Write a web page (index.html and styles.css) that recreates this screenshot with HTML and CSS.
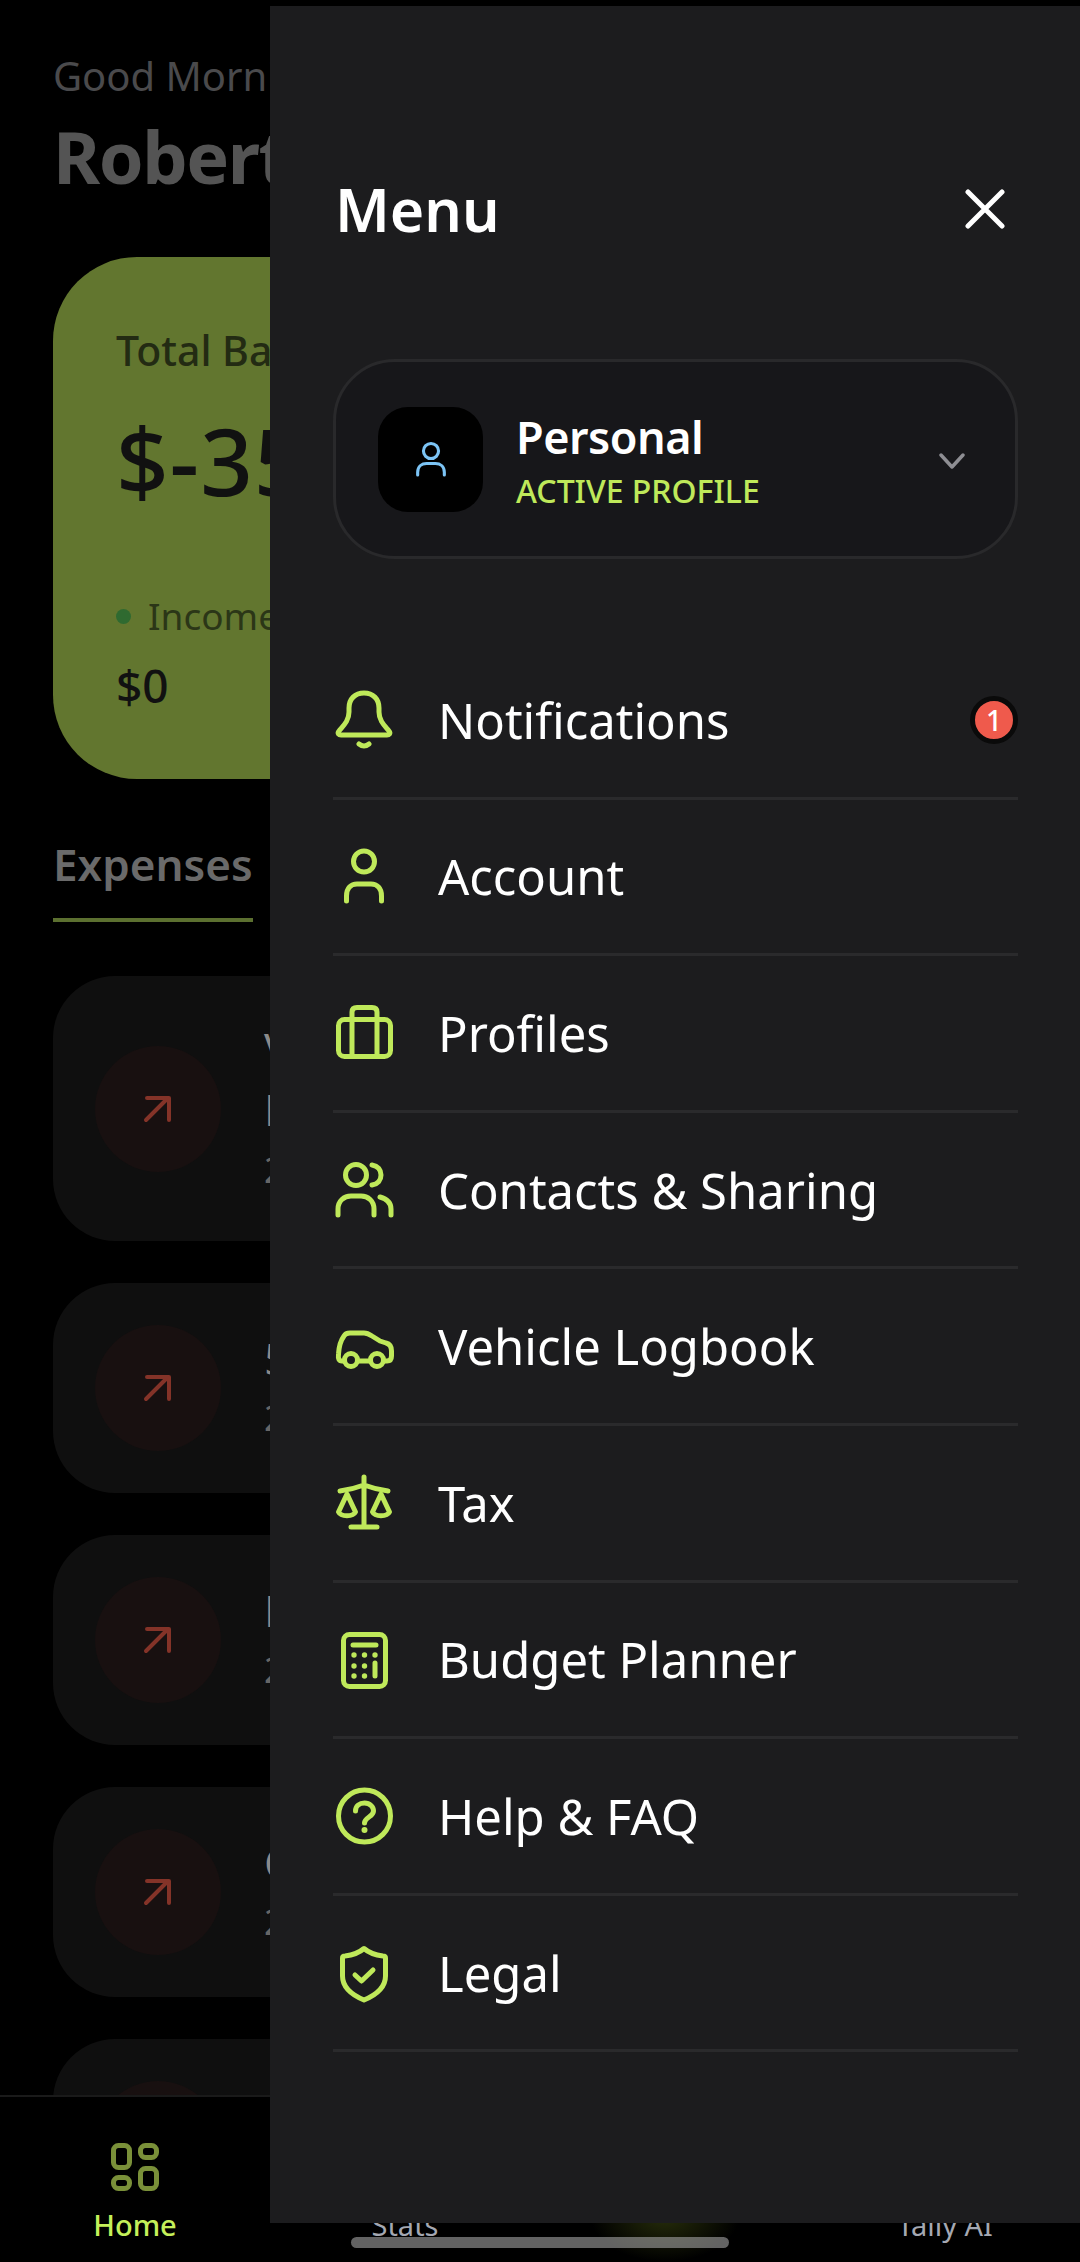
FILE: index.html
```html
<!DOCTYPE html>
<html lang="en">
<head>
  <meta charset="UTF-8" />
  <meta name="viewport" content="width=device-width, initial-scale=1.0"/>
  <title>Tally Menu</title>
  <link rel="stylesheet" href="styles.css">
</head>
<body>

  <div class="app">

    <!-- dimmed home screen behind the drawer -->
    <main class="home">
      <p class="greeting">Good Morning,</p>
      <h1 class="name">Robert</h1>

      <section class="balance">
        <p class="balance-label">Total Balance</p>
        <p class="balance-value">$-350.00</p>
        <p class="income"><span class="dot"></span>Income</p>
        <p class="income-value">$0</p>
      </section>

      <div class="tabs"><span class="tab">Expenses</span></div>

      <div class="tx tx-tall">
        <span class="tx-icon"><svg viewBox="0 0 32 32"><path d="M4 27 L26 5 M5 5 H27 V27"/></svg></span>
        <div><p class="tx-title">Vet</p><p class="tx-sub">Pets</p><p class="tx-date">2 Jan</p></div>
      </div>
      <div class="tx">
        <span class="tx-icon"><svg viewBox="0 0 32 32"><path d="M4 27 L26 5 M5 5 H27 V27"/></svg></span>
        <div><p class="tx-title">5 Star</p><p class="tx-date">2 Jan</p></div>
      </div>
      <div class="tx">
        <span class="tx-icon"><svg viewBox="0 0 32 32"><path d="M4 27 L26 5 M5 5 H27 V27"/></svg></span>
        <div><p class="tx-title">Rent</p><p class="tx-date">2 Jan</p></div>
      </div>
      <div class="tx">
        <span class="tx-icon"><svg viewBox="0 0 32 32"><path d="M4 27 L26 5 M5 5 H27 V27"/></svg></span>
        <div><p class="tx-title">Car</p><p class="tx-date">2 Jan</p></div>
      </div>
      <div class="tx">
        <span class="tx-icon"></span>
      </div>
    </main>

    <nav class="tabbar">
      <div class="tabbar-item active">
        <svg class="tabbar-icon" viewBox="0 0 48 48">
          <rect x="2.5" y="2.5" width="16" height="22" rx="5"/>
          <rect x="29.5" y="2.5" width="16" height="12" rx="5"/>
          <rect x="2.5" y="34.5" width="16" height="11" rx="5"/>
          <rect x="29.5" y="25.5" width="16" height="20" rx="5"/>
        </svg>
        <span>Home</span>
      </div>
      <div class="tabbar-item"><span>Stats</span></div>
      <div class="tabbar-item"><span class="tabbar-gap"></span></div>
      <div class="tabbar-item"><span>Tally AI</span></div>
    </nav>
    <div class="glow"></div>

    <aside class="drawer">
      <header class="drawer-head">
        <h2>Menu</h2>
        <svg class="close" viewBox="0 0 40 40"><path d="M3 3 L37 37 M37 3 L3 37"/></svg>
      </header>

      <div class="profile">
        <span class="avatar">
          <svg viewBox="0 0 36 40"><circle cx="18" cy="11" r="8.5"/><path d="M3 38 V35 C3 28 8 25 13 25 H23 C28 25 33 28 33 35 V38"/></svg>
        </span>
        <div class="profile-text">
          <p class="profile-name">Personal</p>
          <p class="profile-role">ACTIVE PROFILE</p>
        </div>
        <svg class="chevron" viewBox="0 0 26 16"><path d="M2 2 L13 14 L24 2"/></svg>
      </div>

      <ul class="menu">
        <li class="menu-item">
          <svg class="menu-icon" viewBox="0 0 60 60"><path d="M30 3 C21 3 15 9 15 18 V22 C15 31 9 36 5 41 C3 43.5 5 45 7 45 H53 C55 45 57 43.5 55 41 C51 36 45 31 45 22 V18 C45 9 39 3 30 3 Z"/><path d="M25 54 Q30 58 35 54"/></svg>
          <span>Notifications</span>
          <span class="badge">1</span>
        </li>
        <li class="menu-item">
          <svg class="menu-icon" viewBox="0 0 60 60"><circle cx="30" cy="15.5" r="10.5"/><path d="M12.5 55 V50 C12.5 42 17 38 23 38 H37 C43 38 47.5 42 47.5 50 V55"/></svg>
          <span>Account</span>
        </li>
        <li class="menu-item">
          <svg class="menu-icon" viewBox="0 0 60 60"><rect x="4.5" y="16.5" width="52" height="37" rx="6"/><path d="M18 53 V9 C18 6 20 4.5 23 4.5 H38 C41 4.5 43 6 43 9 V53"/></svg>
          <span>Profiles</span>
        </li>
        <li class="menu-item">
          <svg class="menu-icon" viewBox="0 0 60 60"><circle cx="22" cy="15" r="10.5"/><path d="M4 55 V49 C4 41 10 36 17 36 H27 C34 36 40 41 40 49 V55"/><path d="M38 5 C44 6 47 10 47 15 C47 20 44 24 38 25"/><path d="M46 37 C53 39 57 43 57 49 V55"/></svg>
          <span>Contacts &amp; Sharing</span>
        </li>
        <li class="menu-item">
          <svg class="menu-icon" viewBox="0 0 60 60"><path d="M10 45 H8 C5 45 4 43 4.5 38 C5 30 7 24 10 20 C11 18 13 17 16 17 H30 C33 17 35 18 38 20 L46 25 L52 27 C56 28 57.5 31 57.5 35 V40 C57.5 43.5 56 45 53 45 H50 M24 45 H36"/><circle cx="17" cy="44" r="6.5"/><circle cx="43" cy="44" r="6.5"/></svg>
          <span>Vehicle Logbook</span>
        </li>
        <li class="menu-item">
          <svg class="menu-icon" viewBox="0 0 60 60"><path d="M30 4 V54 M17 54 H43 M6 18 C14 17 22 15 30 12 C38 15 46 17 54 18"/><path d="M13 21 L4.5 39 C7 44 19 44 21.5 39 Z"/><path d="M47 21 L38.5 39 C41 44 53 44 55.5 39 Z"/></svg>
          <span>Tax</span>
        </li>
        <li class="menu-item">
          <svg class="menu-icon" viewBox="0 0 60 60"><rect x="9.5" y="5.5" width="42" height="52" rx="6"/><path d="M19 16 H42 M41 34 V47"/><g class="dots"><circle cx="20" cy="26" r="2.7"/><circle cx="30.5" cy="26" r="2.7"/><circle cx="41" cy="26" r="2.7"/><circle cx="20" cy="37" r="2.7"/><circle cx="30.5" cy="37" r="2.7"/><circle cx="20" cy="47" r="2.7"/><circle cx="30.5" cy="47" r="2.7"/></g></svg>
          <span>Budget Planner</span>
        </li>
        <li class="menu-item">
          <svg class="menu-icon" viewBox="0 0 60 60"><circle cx="30.5" cy="30" r="26"/><path d="M21.5 25 C21.5 20 25.5 17 30.5 17 C36 17 39.5 21 39.5 25 C39.5 31 30.5 31 30.5 37"/><g class="dots"><circle cx="30.5" cy="44" r="3"/></g></svg>
          <span>Help &amp; FAQ</span>
        </li>
        <li class="menu-item">
          <svg class="menu-icon" viewBox="0 0 60 60"><path d="M30 5.5 C34 9 41 12 49 13 C51 13 51.5 14 51.5 15 V33 C51.5 45 42 52 30 57 C18 52 8.5 45 8.5 33 V15 C8.5 14 9 13 11 13 C19 12 26 9 30 5.5 Z"/><path d="M21 32 L27.5 38 L39 27"/></svg>
          <span>Legal</span>
        </li>
      </ul>
    </aside>

    <div class="home-bar"></div>
  </div>

</body>
</html>
```

FILE: styles.css
```css
* {
  box-sizing: border-box;
}

body {
  margin: 0;
  padding: 0;
  background: #000;
  font-family: 'Noto Sans', sans-serif;
}

p, h1, h2, ul {
  margin: 0;
  padding: 0;
}

.app {
  position: relative;
  width: 1080px;
  height: 2262px;
  overflow: hidden;
  background: #000;
}

/* home screen behind the drawer */
.home {
  padding: 48px 0 0 53px;
  width: 1080px;
}

.greeting {
  font-size: 40px;
  line-height: 56px;
  color: #4a4a4c;
}

.name {
  margin-top: 2px;
  font-size: 72px;
  line-height: 100px;
  letter-spacing: -1.5px;
  font-weight: 700;
  color: #545454;
}

.balance {
  margin-top: 51px;
  width: 974px;
  height: 522px;
  padding: 68px 0 0 63px;
  border-radius: 84px;
  background: #62762f;
}

.balance-label {
  font-size: 41px;
  line-height: 50px;
  font-weight: 500;
  color: #232b13;
}

.balance-value {
  margin-top: 36px;
  font-size: 92px;
  line-height: 100px;
  letter-spacing: 1px;
  font-weight: 500;
  color: #111;
}

.income {
  display: flex;
  align-items: center;
  margin-top: 82px;
  font-size: 37px;
  line-height: 46px;
  color: #2b3617;
}

.dot {
  width: 15px;
  height: 15px;
  margin-right: 17px;
  border-radius: 50%;
  background: #2f6a30;
}

.income-value {
  margin-top: 18px;
  font-size: 46px;
  line-height: 56px;
  font-weight: 500;
  color: #111;
}

.tabs {
  margin-top: 55px;
  height: 88px;
}

.tab {
  display: inline-block;
  height: 88px;
  border-bottom: 4px solid #5c7030;
  font-size: 44px;
  line-height: 60px;
  font-weight: 600;
  color: #6a6a6a;
}

.tx {
  display: flex;
  align-items: center;
  width: 974px;
  height: 210px;
  margin-bottom: 42px;
  padding-left: 42px;
  border-radius: 62px;
  background: #0f0f0f;
  overflow: hidden;
}

.tx-tall {
  height: 265px;
  margin-top: 54px;
}

.tx-icon {
  display: flex;
  align-items: center;
  justify-content: center;
  flex-shrink: 0;
  width: 126px;
  height: 126px;
  margin-right: 43px;
  border-radius: 50%;
  background: #181010;
}

.tx-icon svg {
  width: 32px;
  height: 32px;
  fill: none;
  stroke: #843328;
  stroke-width: 4;
  stroke-linecap: round;
  stroke-linejoin: round;
}

.tx-title {
  font-size: 44px;
  line-height: 60px;
  color: #8a8a8a;
}

.tx-sub {
  font-size: 44px;
  line-height: 62px;
  color: #8a8a8a;
}

.tx-date {
  font-size: 36px;
  line-height: 60px;
  color: #666;
}

/* bottom tab bar */
.tabbar {
  position: absolute;
  left: 0;
  right: 0;
  bottom: 0;
  height: 167px;
  display: grid;
  grid-template-columns: 270px 270px 270px 270px;
  border-top: 2px solid #1a1a1a;
  background: #000;
}

.tabbar-item {
  display: flex;
  flex-direction: column;
  align-items: center;
  justify-content: flex-end;
  padding-bottom: 17px;
  font-size: 29px;
  line-height: 40px;
  color: #a4a8b2;
}

.tabbar-item.active {
  color: #c4f05a;
  font-weight: 500;
}

.tabbar-icon {
  width: 48px;
  height: 48px;
  margin-bottom: 14px;
  fill: none;
  stroke: #7a9039;
  stroke-width: 5;
}

.glow {
  position: absolute;
  left: 590px;
  top: 2170px;
  width: 150px;
  height: 92px;
  background: radial-gradient(ellipse at center, rgba(110, 130, 30, 0.35), rgba(110, 130, 30, 0) 70%);
}

/* drawer */
.drawer {
  position: absolute;
  left: 270px;
  top: 6px;
  width: 810px;
  height: 2217px;
  padding: 0 62px 0 63px;
  background: #1c1c1e;
}

.drawer-head {
  display: flex;
  align-items: center;
  justify-content: space-between;
  height: 353px;
  padding: 53px 13px 0 2px;
}

.drawer-head h2 {
  margin: 0;
  font-size: 59px;
  font-weight: 600;
  color: #fff;
}

.close {
  width: 40px;
  height: 40px;
  fill: none;
  stroke: #fff;
  stroke-width: 5;
  stroke-linecap: round;
}

.profile {
  display: flex;
  align-items: center;
  height: 200px;
  padding: 0 50px 0 42px;
  border: 3px solid #29292b;
  border-radius: 62px;
  background: #17171a;
}

.avatar {
  display: flex;
  align-items: center;
  justify-content: center;
  width: 105px;
  height: 105px;
  border-radius: 30px;
  background: #000;
}

.avatar svg {
  width: 32px;
  height: 38px;
  fill: none;
  stroke: #7cc4f5;
  stroke-width: 3.5;
  stroke-linecap: round;
}

.profile-text {
  flex: 1;
  margin-left: 33px;
  padding-top: 3px;
}

.profile-name {
  font-size: 45px;
  line-height: 56px;
  letter-spacing: -0.5px;
  font-weight: 600;
  color: #fff;
}

.profile-role {
  margin-top: 5px;
  font-size: 32px;
  line-height: 42px;
  font-weight: 500;
  color: #bfe95a;
}

.chevron {
  width: 26px;
  height: 16px;
  margin-top: 4px;
  fill: none;
  stroke: #8e8e93;
  stroke-width: 3.5;
  stroke-linecap: round;
  stroke-linejoin: round;
}

.menu {
  margin-top: 84px;
  list-style: none;
}

.menu-item {
  display: flex;
  align-items: center;
  height: 156.6px;
  border-bottom: 3px solid #2a2a2c;
  font-size: 49px;
  color: #fff;
}

.menu-icon {
  flex-shrink: 0;
  width: 60px;
  height: 60px;
  margin: 0 44px 0 1px;
  fill: none;
  stroke: #bfe95a;
  stroke-width: 5;
  stroke-linecap: round;
  stroke-linejoin: round;
}

.dots circle {
  fill: #bfe95a;
  stroke: none;
}

.badge {
  display: flex;
  align-items: center;
  justify-content: center;
  width: 48px;
  height: 48px;
  margin-left: auto;
  border: 5px solid #0a0a0a;
  border-radius: 50%;
  background: #ef5a4c;
  font-size: 28px;
  font-weight: 500;
  color: #fff;
}

.home-bar {
  position: absolute;
  left: 351px;
  top: 2237px;
  width: 378px;
  height: 11px;
  border-radius: 6px;
  background: rgba(160, 160, 160, 0.62);
}
```
